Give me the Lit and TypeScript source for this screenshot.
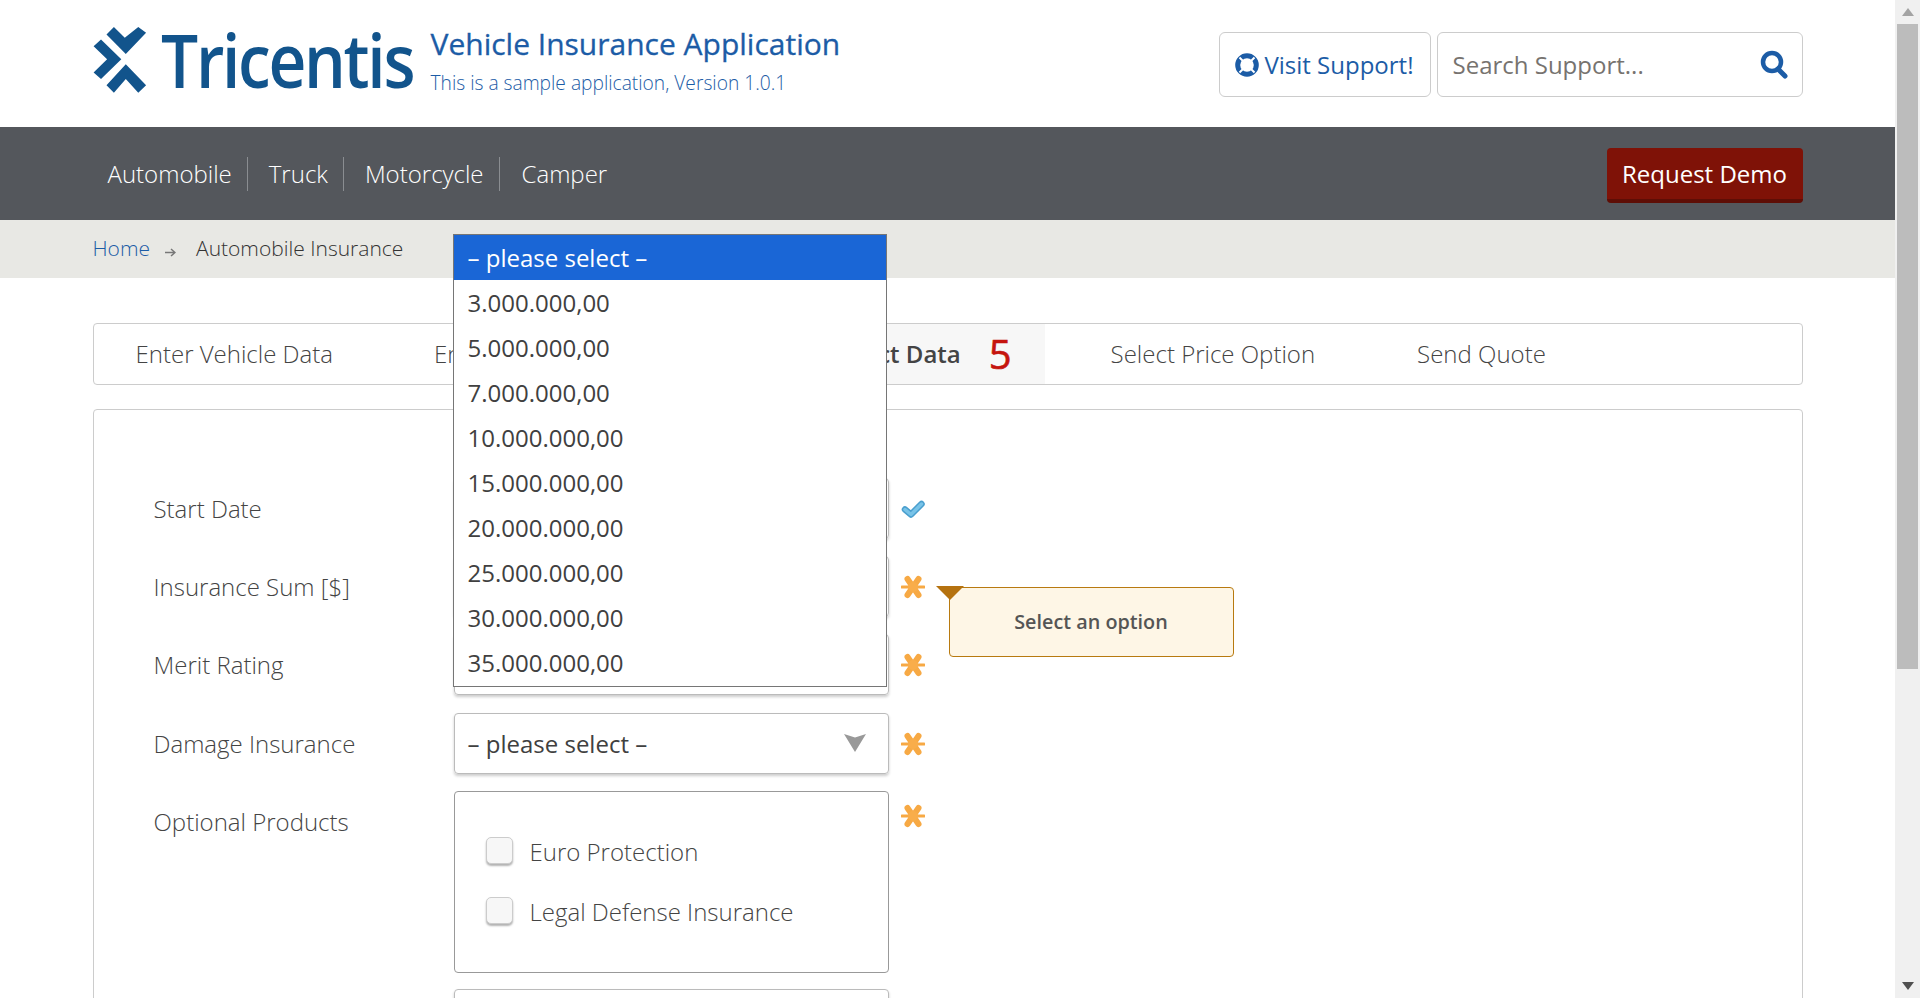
import { LitElement, css, html, svg } from "lit";
import { customElement } from "lit/decorators.js";

const asterisk = svg`<svg class="mark" width="24" height="24" viewBox="0 0 24 24"><g stroke="#f7a944" stroke-linecap="round"><path d="M1 12h22" stroke-width="3"/><path d="M6.500 4l11 16" stroke-width="6"/><path d="M17.500 4l-11 16" stroke-width="6"/></g><circle cx="12" cy="12" r="5" fill="#f9ad4a"/></svg>`;
const check = svg`<svg class="mark" width="24" height="24" viewBox="0 0 24 24"><path d="M4 12.500l6 5L20.500 7" fill="none" stroke="#4a9fce" stroke-width="6.500" stroke-linecap="round" stroke-linejoin="round"/><path d="M4 12.500l6 5L20.500 7" fill="none" stroke="#78c3e8" stroke-width="3.500" stroke-linecap="round" stroke-linejoin="round"/></svg>`;
const caret = svg`<svg width="22" height="18" viewBox="0 0 22 18"><path d="M0 0l11 3.500L22 0 11 18z" fill="#999"/></svg>`;

const options = [
  "– please select –",
  "3.000.000,00",
  "5.000.000,00",
  "7.000.000,00",
  "10.000.000,00",
  "15.000.000,00",
  "20.000.000,00",
  "25.000.000,00",
  "30.000.000,00",
  "35.000.000,00",
];

@customElement("app-root")
export class AppRoot extends LitElement {
  static styles = css`
    :host {
      display: flex;
      height: 998px;
      overflow: hidden;
      font-family: "Open Sans", "Noto Sans", sans-serif;
      color: #333;
      background: #fff;
    }

    .page {
      width: 1895px;
      flex: none;
    }

    .wrap {
      width: 1710px;
      margin: 0 auto;
      display: flex;
      align-items: center;
    }

    .top {
      height: 127px;
    }

    .top .wrap {
      height: 127px;
    }

    .logo {
      display: flex;
      align-items: center;
      width: 338px;
      margin-top: -7px;
    }

    .logo svg {
      flex: none;
    }

    .logo-text {
      display: inline-block;
      font-size: 74px;
      font-weight: 600;
      color: #12548c;
      letter-spacing: -2.6px;
      line-height: 1;
      margin-left: 14px;
      transform: scaleX(0.89);
      transform-origin: left center;
    }

    .title {
      flex: 1;
      margin-top: -8px;
    }

    .title h1 {
      margin: -1px 0 0;
      font-size: 30px;
      line-height: 40px;
      font-weight: 400;
      color: #1c5ca6;
      -webkit-text-stroke: 0.3px #1c5ca6;
    }

    .title p {
      margin: 7px 0 0;
      font-size: 19.2px;
      line-height: 24px;
      font-weight: 300;
      color: #1c5ca6;
    }

    .support {
      height: 65px;
      box-sizing: border-box;
      border: 1px solid #ccc;
      border-radius: 6px;
      display: flex;
      align-items: center;
      font-size: 24px;
      margin-top: 2px;
    }

    .visit {
      width: 212px;
      justify-content: center;
      gap: 5px;
      color: #1c5ca6;
      margin-right: 6px;
    }

    .search {
      width: 366px;
      padding: 0 13px 0 15px;
      justify-content: space-between;
      color: #77736f;
    }

    .nav {
      background: #54575c;
      height: 93px;
    }

    .nav .wrap {
      height: 93px;
      justify-content: space-between;
    }

    .nav ul {
      display: flex;
      margin: 0;
      padding: 0;
      list-style: none;
    }

    .nav li {
      color: #fff;
      font-size: 24px;
      font-weight: 300;
      line-height: 34px;
      padding: 0 15px 0 21px;
      border-right: 1px solid #8a8d91;
    }

    .nav li:first-child {
      padding-left: 15px;
    }

    .nav li:last-child {
      border-right: 0;
      padding-left: 22px;
    }

    .demo {
      width: 196px;
      height: 55px;
      box-sizing: border-box;
      background: #7f1207;
      border-bottom: 4px solid #5e0e06;
      border-radius: 4px;
      color: #fff;
      font-size: 24px;
      display: flex;
      align-items: center;
      justify-content: center;
      margin-top: 3px;
    }

    .crumbs {
      background: #e8e8e4;
      height: 58px;
    }

    .crumbs .wrap {
      height: 56px;
      font-size: 21px;
      font-weight: 300;
    }

    .crumbs a {
      color: #1c5ca6;
    }

    .crumbs .arrow {
      margin: 8px 20px 0 15px;
      display: flex;
    }

    .wizard {
      width: 1710px;
      height: 62px;
      box-sizing: border-box;
      margin: 45px auto 24px;
      border: 1px solid #ccc;
      border-radius: 4px;
      display: flex;
      align-items: stretch;
      font-size: 24px;
      font-weight: 300;
      color: #444;
    }

    .step {
      display: flex;
      align-items: center;
      padding: 0 51px 2px;
      white-space: nowrap;
    }

    .step:first-child {
      padding: 0 50px 2px 42px;
    }

    .step.active {
      background: #f7f7f7;
      font-weight: 600;
      padding-left: 44px;
      padding-right: 33px;
      margin-right: 15px;
    }

    .step b {
      color: #c5140e;
      font-size: 40px;
      font-weight: 400;
      margin-left: 28px;
      -webkit-text-stroke: 0.6px #c5140e;
    }

    .form {
      width: 1710px;
      height: 700px;
      box-sizing: border-box;
      margin: 0 auto;
      border: 1px solid #ccc;
      border-radius: 4px;
      padding: 68px 0 0 60px;
    }

    .row {
      display: flex;
      margin-bottom: 17.2px;
      position: relative;
    }

    .row.tall {
      margin-bottom: 16px;
    }

    .row label {
      width: 300px;
      font-size: 24px;
      font-weight: 300;
      line-height: 61px;
      color: #444;
    }

    .field {
      width: 435px;
      height: 61px;
      box-sizing: border-box;
      border: 1px solid #bbb;
      border-radius: 4px;
      box-shadow: 0 2px 3px rgba(0, 0, 0, 0.2);
      position: relative;
      display: flex;
      align-items: center;
      justify-content: space-between;
      padding: 0 22px 0 13px;
      font-size: 24px;
      color: #404040;
    }

    .mark {
      margin: 19px 0 0 12px;
      flex: none;
    }

    .tall .mark {
      margin-top: 13px;
    }

    .popup {
      position: absolute;
      left: -2px;
      top: -323px;
      width: 434px;
      box-sizing: border-box;
      border: 1px solid #767676;
      padding-bottom: 1px;
      background: #fff;
      z-index: 2;
    }

    .popup div {
      height: 45px;
      line-height: 45px;
      padding-left: 14px;
    }

    .popup div.on {
      background: #1a66d6;
      color: #fff;
    }

    .checks {
      height: 182px;
      display: block;
      padding: 30px 0 0 31px;
      box-shadow: none;
      border-color: #999;
    }

    .check {
      display: flex;
      align-items: center;
      height: 60px;
      font-size: 24px;
      font-weight: 300;
      color: #444;
    }

    .box {
      width: 27px;
      height: 27px;
      box-sizing: border-box;
      border: 1px solid #ccc;
      border-radius: 5px;
      background: #f7f7f7;
      box-shadow: 0 2px 2px rgba(0, 0, 0, 0.3);
      margin: -3px 17px 0 0;
    }

    .tip {
      position: absolute;
      left: 795px;
      top: 31px;
      width: 285px;
      height: 70px;
      box-sizing: border-box;
      padding-bottom: 2px;
      background: #fef6e6;
      border: 1px solid #b87a10;
      border-radius: 4px;
      font-size: 19.8px;
      font-weight: 600;
      color: #555;
      display: flex;
      align-items: center;
      justify-content: center;
    }

    .tip::before {
      content: "";
      position: absolute;
      left: -14px;
      top: -2px;
      border: solid transparent;
      border-width: 14px 14px 0;
      border-top-color: #b5720f;
    }

    .scrollbar {
      width: 25px;
      flex: none;
      background: #f0f0f0;
      display: flex;
      flex-direction: column;
      align-items: center;
    }

    .scrollbar .up,
    .scrollbar .down {
      height: 24px;
      display: flex;
      align-items: center;
      justify-content: center;
    }

    .thumb {
      width: 21px;
      height: 645px;
      background: #bcbcbc;
    }

    .spacer {
      flex: 1;
    }
  `;

  protected render(): unknown {
    return html`
      <div class="page">
        <header class="top">
          <div class="wrap">
            <div class="logo">
              <svg width="54" height="66" viewBox="0 0 52 65">
                <path
                  d="M20 0l10.700 10.700L44 0l7.700 5.700-20 21L12.700 7.300zM31.700 36.700l20 20.600-7.700 7.400-12.300-13.400L20 64.700l-7.300-7.400zM0 19l7.300-6.700 20 19.400-20 19.600L0 44.700l13.300-13z"
                  fill="#12548c"
                />
              </svg>
              <span class="logo-text">Tricentis</span>
            </div>
            <div class="title">
              <h1>Vehicle Insurance Application</h1>
              <p>This is a sample application, Version 1.0.1</p>
            </div>
            <div class="support visit">
              <svg width="24" height="24" viewBox="0 0 24 24">
                <circle cx="12" cy="12" r="9.300" fill="none" stroke="#1c5ca6" stroke-width="5" />
                <path d="M4.500 4.500l4 4M15.500 15.500l4 4M19.500 4.500l-4 4M8.500 15.500l-4 4" stroke="#fff" stroke-width="2" />
              </svg>
              Visit Support!
            </div>
            <div class="support search">
              Search Support...
              <svg width="30" height="30" viewBox="0 0 30 30">
                <circle cx="13" cy="12" r="9" fill="none" stroke="#1c5ca6" stroke-width="4.500" />
                <path d="M19 19l7 7" stroke="#1c5ca6" stroke-width="5" stroke-linecap="round" />
              </svg>
            </div>
          </div>
        </header>
        <nav class="nav">
          <div class="wrap">
            <ul>
              <li>Automobile</li>
              <li>Truck</li>
              <li>Motorcycle</li>
              <li>Camper</li>
            </ul>
            <div class="demo">Request Demo</div>
          </div>
        </nav>
        <div class="crumbs">
          <div class="wrap">
            <a>Home</a>
            <span class="arrow">
              <svg width="11" height="9" viewBox="0 0 11 9">
                <path d="M0 4.500h9M6 1l4 3.500L6 8" fill="none" stroke="#777" stroke-width="1.500" />
              </svg>
            </span>
            <span>Automobile Insurance</span>
          </div>
        </div>
        <div class="wizard">
          <div class="step">Enter Vehicle Data</div>
          <div class="step">Enter Insurant Data</div>
          <div class="step active">Enter Product Data<b>5</b></div>
          <div class="step">Select Price Option</div>
          <div class="step">Send Quote</div>
        </div>
        <div class="form">
          <div class="row">
            <label>Start Date</label>
            <div class="field"></div>
            ${check}
          </div>
          <div class="row">
            <label>Insurance Sum [$]</label>
            <div class="field">
              <div class="popup">
                ${options.map(
                  (o, i) => html`<div class="${i === 0 ? "on" : ""}">${o}</div>`
                )}
              </div>
            </div>
            ${asterisk}
            <div class="tip">Select an option</div>
          </div>
          <div class="row">
            <label>Merit Rating</label>
            <div class="field"></div>
            ${asterisk}
          </div>
          <div class="row">
            <label>Damage Insurance</label>
            <div class="field">– please select – ${caret}</div>
            ${asterisk}
          </div>
          <div class="row tall">
            <label>Optional Products</label>
            <div class="field checks">
              <div class="check"><span class="box"></span>Euro Protection</div>
              <div class="check"><span class="box"></span>Legal Defense Insurance</div>
            </div>
            ${asterisk}
          </div>
          <div class="row">
            <label></label>
            <div class="field"></div>
          </div>
        </div>
      </div>
      <div class="scrollbar">
        <div class="up">
          <svg width="12" height="8" viewBox="0 0 12 8"><path d="M6 0l6 8H0z" fill="#a3a3a3" /></svg>
        </div>
        <div class="thumb"></div>
        <div class="spacer"></div>
        <div class="down">
          <svg width="12" height="8" viewBox="0 0 12 8"><path d="M6 8L0 0h12z" fill="#505050" /></svg>
        </div>
      </div>
    `;
  }
}
